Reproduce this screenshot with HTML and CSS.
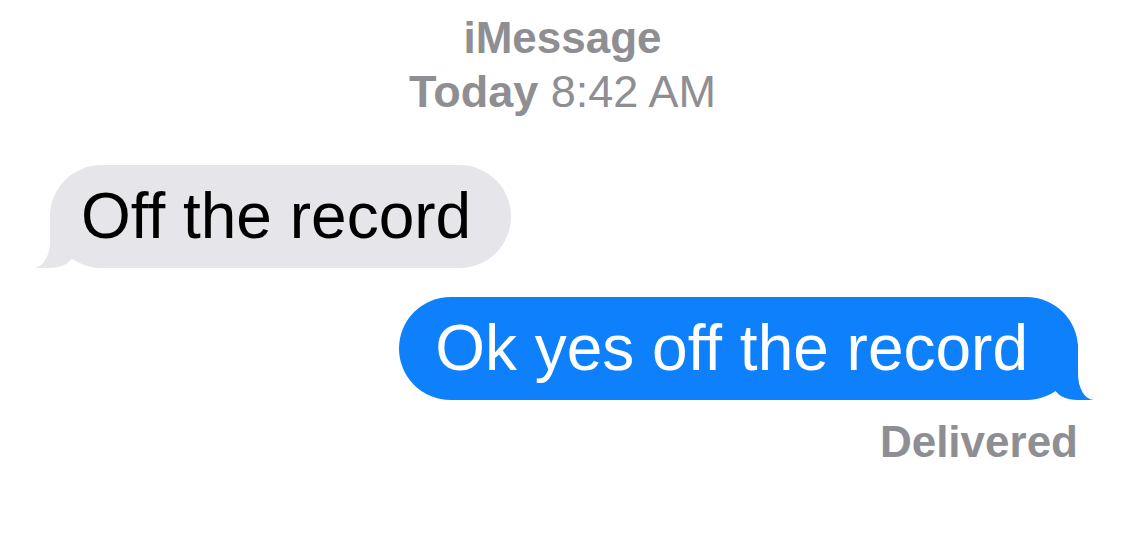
FILE: index.html
```html
<!DOCTYPE html>
<html lang="en">
<head>
  <meta charset="UTF-8">
  <title>iMessage</title>
  <link rel="stylesheet" href="styles.css">
</head>
<body>

<div class="thread">
  <header class="meta">
    <div class="service">iMessage</div>
    <div class="stamp"><strong>Today</strong> 8:42 AM</div>
  </header>

  <div class="bubble received">Off the record</div>
  <div class="bubble sent">Ok yes off the record</div>

  <div class="status">Delivered</div>
</div>

</body>
</html>
```

FILE: styles.css
```css
body {
  margin: 0;
  background: #fff;
  font-family: "Liberation Sans", Arial, sans-serif;
  font-variant-ligatures: none;
  font-feature-settings: "liga" 0, "clig" 0;
}

.thread {
  display: flex;
  flex-direction: column;
  padding: 11px 47px 0 50px;
}

.meta {
  color: #8e8e93;
  font-size: 44px;
  line-height: 54px;
  text-align: center;
  margin-left: -50px;   /* centre on the whole page */
  margin-right: -47px;
}

.service,
.stamp strong {
  font-weight: bold;
}

.stamp {
  font-size: 45px;
}

.bubble {
  position: relative;
  z-index: 0;
  font-size: 64px;
  line-height: 77px;
  border-radius: 52px;
  white-space: nowrap;
}

/* tail: a coloured block, then a white block with a rounded corner cut into it */
.bubble::before,
.bubble::after {
  content: "";
  position: absolute;
  bottom: 0;
  z-index: -1;
}

.received {
  align-self: flex-start;
  margin-top: 46px;
  padding: 13px 40px 13px 31px;
  background: #e5e5ea;
  color: #000;
}

.received::before {
  left: -17px;
  width: 40px;
  height: 56px;
  background: #e5e5ea;
  border-bottom-right-radius: 24px 14px;
}

.received::after {
  left: -50px;
  width: 50px;
  height: 56px;
  background: #fff;
  border-bottom-right-radius: 17px 26px;
}

.sent {
  align-self: flex-end;
  margin-top: 29px;
  padding: 13px 50px 13px 36px;
  background: #0f80fb;
  color: #fff;
}

.sent::before {
  right: -16px;
  width: 40px;
  height: 56px;
  background: #0f80fb;
  border-bottom-left-radius: 24px 14px;
}

.sent::after {
  right: -50px;
  width: 50px;
  height: 56px;
  background: #fff;
  border-bottom-left-radius: 16px 26px;
}

.status {
  align-self: flex-end;
  margin-top: 15px;
  color: #8e8e93;
  font-size: 44px;
  line-height: 54px;
  font-weight: bold;
}
```
